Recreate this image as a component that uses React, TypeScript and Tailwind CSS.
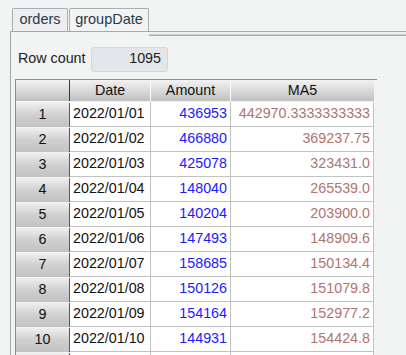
import React from "react";

const rows: [string, string, string][] = [
  ["2022/01/01", "436953", "442970.3333333333"],
  ["2022/01/02", "466880", "369237.75"],
  ["2022/01/03", "425078", "323431.0"],
  ["2022/01/04", "148040", "265539.0"],
  ["2022/01/05", "140204", "203900.0"],
  ["2022/01/06", "147493", "148909.6"],
  ["2022/01/07", "158685", "150134.4"],
  ["2022/01/08", "150126", "151079.8"],
  ["2022/01/09", "154164", "152977.2"],
  ["2022/01/10", "144931", "154424.8"],
  ["", "", ""],
];

export default function App() {
  return (
    <div
      className="w-[406px] h-[355px] overflow-hidden bg-[#f2f3f3] relative"
      style={{ fontFamily: '"Liberation Sans", Arial, sans-serif' }}
    >
      {/* tabs */}
      <div className="flex pl-[12px] pt-[8px] h-[31px] items-end">
        <div className="w-[56px] h-[23px] border border-b-0 border-[#a7afb6] bg-[#eceeef] rounded-t-[2px] flex items-center justify-center text-[14.5px] text-[#2b3848]">
          orders
        </div>
        <div className="ml-[1px] w-[80px] h-[23px] border border-b-0 border-[#a7afb6] bg-[#f2f3f3] rounded-t-[2px] flex items-center justify-center text-[14.5px] text-[#2b3848]">
          groupDate
        </div>
      </div>
      {/* panel */}
      <div className="ml-[10px] border-l border-t border-[#a2aab1] h-[330px]">
        <div className="border-t border-[#c4c9ce] mt-[2px] ml-[138px]" />
        <div className="border-t border-[#a9b0b6] ml-[138px]" />
        <div className="flex items-center pl-[7px] mt-[10px] h-[26px]">
          <span className="text-[14.3px] text-[#222] w-[73px]">Row count</span>
          <div className="w-[77px] h-[25px] rounded-[3px] bg-[#e3e6ea] border border-[#d3d7db] flex items-center justify-end pr-[6px] text-[14.3px] text-[#222]">
            1095
          </div>
        </div>
        {/* table */}
        <div className="ml-[4px] mt-[7px] flex flex-col border-l border-t border-[#8c8c8c] w-[362px]">
          <div className="flex h-[22px]">
            <div className="w-[54px] h-[21px] bg-gradient-to-b from-[#f3f3f3] to-[#c0c0c0] border-r border-[#3a3a3a]" />
            <div className="w-[81px] h-[21px] bg-gradient-to-b from-[#f3f3f3] to-[#c0c0c0] border-r border-white flex items-center justify-center text-[14.3px] text-[#111]">
              Date
            </div>
            <div className="w-[80px] h-[21px] bg-gradient-to-b from-[#f3f3f3] to-[#c0c0c0] border-r border-white flex items-center justify-center text-[14.3px] text-[#111]">
              Amount
            </div>
            <div className="w-[143px] h-[21px] bg-gradient-to-b from-[#f3f3f3] to-[#c0c0c0] flex items-center justify-center text-[14.3px] text-[#111]">
              MA5
            </div>
          </div>
          {rows.map((r, i) => (
            <div key={i} className="flex h-[25px]">
              <div className="w-[54px] h-[24px] mt-[1px] bg-gradient-to-b from-[#efefef] via-[#d0d0d0] to-[#c2c2c2] border-r border-[#5a5a5a] flex items-center justify-center text-[14.3px] text-[#111]">
                {r[0] ? i + 1 : ""}
              </div>
              <div className="w-[81px] bg-white border-b border-r border-[#c2c2c2] flex items-center pl-[3px] text-[14.3px] text-[#111]">
                {r[0]}
              </div>
              <div className="w-[80px] bg-white border-b border-r border-[#c2c2c2] flex items-center justify-end pr-[3px] text-[14.3px] text-[#1a1aff]">
                {r[1]}
              </div>
              <div className="w-[143px] bg-white border-b border-r border-[#c2c2c2] flex items-center justify-end pr-[3px] text-[14.3px] text-[#b27373]">
                {r[2]}
              </div>
            </div>
          ))}
        </div>
      </div>
    </div>
  );
}
